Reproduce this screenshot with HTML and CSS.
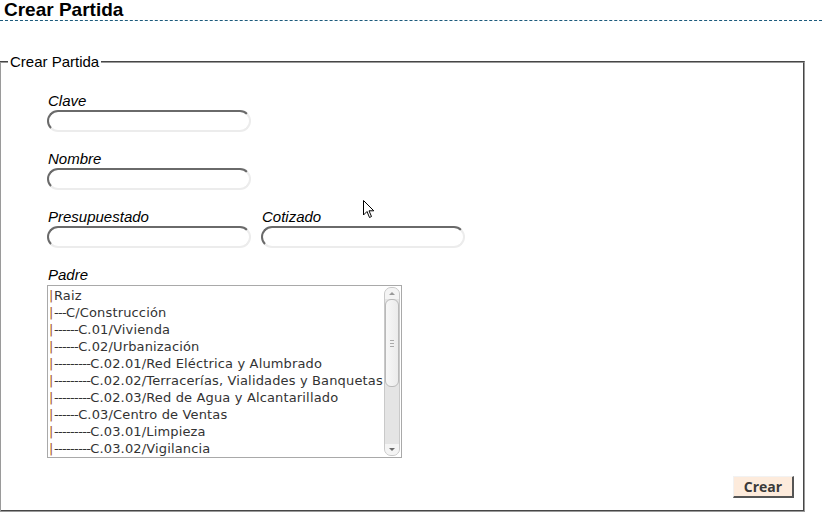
FILE: index.html
```html
<!DOCTYPE html>
<html lang="es">
<head>
<meta charset="utf-8">
<title>Crear Partida</title>
<link rel="stylesheet" href="styles.css">
</head>
<body>
<h1 class="title">Crear Partida</h1>
<fieldset class="box">
  <legend class="legend">Crear Partida</legend>
  <div class="form">
    <div class="row">
      <div class="field">
        <label class="label">Clave</label>
        <div class="input"></div>
      </div>
    </div>
    <div class="row">
      <div class="field">
        <label class="label">Nombre</label>
        <div class="input"></div>
      </div>
    </div>
    <div class="row">
      <div class="field">
        <label class="label">Presupuestado</label>
        <div class="input"></div>
      </div>
      <div class="field">
        <label class="label">Cotizado</label>
        <div class="input"></div>
      </div>
    </div>
    <div class="row">
      <div class="field">
        <label class="label">Padre</label>
        <div class="listbox">
          <div class="options">
            <div class="opt"><span class="bar">|</span>Raiz</div>
            <div class="opt"><span class="bar">|</span><span class="d">---</span>C/Construcción</div>
            <div class="opt"><span class="bar">|</span><span class="d">------</span>C.01/Vivienda</div>
            <div class="opt"><span class="bar">|</span><span class="d">------</span>C.02/Urbanización</div>
            <div class="opt"><span class="bar">|</span><span class="d">---------</span>C.02.01/Red Eléctrica y Alumbrado</div>
            <div class="opt"><span class="bar">|</span><span class="d">---------</span>C.02.02/Terracerías, Vialidades y Banquetas</div>
            <div class="opt"><span class="bar">|</span><span class="d">---------</span>C.02.03/Red de Agua y Alcantarillado</div>
            <div class="opt"><span class="bar">|</span><span class="d">------</span>C.03/Centro de Ventas</div>
            <div class="opt"><span class="bar">|</span><span class="d">---------</span>C.03.01/Limpieza</div>
            <div class="opt"><span class="bar">|</span><span class="d">---------</span>C.03.02/Vigilancia</div>
          </div>
          <div class="scrollbar">
            <div class="arrow up"></div>
            <div class="track"><div class="thumb"><span class="grip"></span></div></div>
            <div class="arrow down"></div>
          </div>
        </div>
      </div>
    </div>
  </div>
  <div class="actions">
    <button class="btn" type="button">Crear</button>
  </div>
</fieldset>
<svg class="cursor" width="12" height="19" viewBox="0 0 12 19"><path d="M0.5 0.5 L0.5 15 L4 11.5 L6.5 17.5 L8.5 16.5 L6 10.8 L10.8 10.8 Z" fill="#fff" stroke="#000" stroke-width="1"/></svg>
</body>
</html>
```

FILE: styles.css
```css
html, body {
  margin: 0;
  padding: 0;
  background: #fff;
  font-family: "Liberation Sans", Arial, sans-serif;
  color: #000;
}
body {
  position: relative;
  width: 822px;
  height: 522px;
  overflow: hidden;
}
.title {
  margin: 0;
  padding: 0 0 0 4px;
  height: 20px;
  font-size: 19px;
  font-weight: bold;
  line-height: 19px;
  border-bottom: 1px dashed #1d5b7c;
}
.box {
  margin: 33px 0 0 0;
  width: 788px;
  height: 454px;
  padding: 0 7px 0 7px;
  border: 2px groove #9a9a9a;
  border-left-width: 1px;
}
.legend {
  padding: 0 2px;
  font-size: 15px;
  line-height: 16px;
}
.form {
  padding-left: 39px;
  padding-top: 22px;
  display: flex;
  flex-direction: column;
  gap: 18px;
}
.row {
  display: flex;
  gap: 10px;
}
.field {
  display: flex;
  flex-direction: column;
}
.label {
  font-style: italic;
  font-size: 15px;
  line-height: 18px;
  padding-left: 1px;
}
.input {
  width: 200px;
  height: 18px;
  border: 2px solid;
  border-color: #6a6a6a #ececec #ececec #6a6a6a;
  border-radius: 11px;
  background: #fff;
}
.listbox {
  margin-top: 1px;
  width: 353px;
  height: 171px;
  border: 1px solid #a9a9a9;
  display: flex;
  background: #fff;
}
.options {
  flex: 1;
  padding: 1px 0 0 1px;
  overflow: hidden;
  font-family: "DejaVu Sans", sans-serif;
  font-size: 13px;
  color: #333;
}
.opt {
  height: 17px;
  line-height: 17px;
  white-space: nowrap;
  letter-spacing: 0.15px;
}
.d {
  letter-spacing: -0.65px;
}
.bar {
  color: #a4561c;
  letter-spacing: 0;
  margin-right: 0.5px;
}
.scrollbar {
  width: 14px;
  margin: 1px 1px 1px 0;
  display: flex;
  flex-direction: column;
  border: 1px solid #c9c9c9;
  border-radius: 7px;
  background: #e4e4e4;
}
.arrow {
  height: 11px;
  position: relative;
  background: #f4f4f4;
}
.arrow.up { border-radius: 6px 6px 0 0; }
.arrow.down { border-radius: 0 0 6px 6px; }
.arrow::after {
  content: "";
  position: absolute;
  left: 4px;
  width: 0;
  height: 0;
  border-left: 3px solid transparent;
  border-right: 3px solid transparent;
}
.arrow.up::after { top: 4px; border-bottom: 3px solid #9a9a9a; }
.arrow.down::after { top: 4px; border-top: 3px solid #6a6a6a; }
.track {
  flex: 1;
}
.thumb {
  height: 86px;
  background: linear-gradient(to right, #f7f7f7, #ebebeb);
  border: 1px solid #b9b9b9;
  border-radius: 6px;
  display: flex;
  align-items: center;
  justify-content: center;
}
.grip {
  width: 4px;
  height: 5px;
  border-top: 1px solid #aaa;
  border-bottom: 1px solid #aaa;
  position: relative;
}
.grip::after {
  content: "";
  position: absolute;
  left: 0;
  right: 0;
  top: 2px;
  border-top: 1px solid #aaa;
}
.actions {
  display: flex;
  justify-content: flex-end;
  padding-right: 2px;
  margin-top: 18px;
}
.btn {
  width: 61px;
  height: 22px;
  padding: 0;
  background: #fdebdc;
  border-style: solid;
  border-width: 1px 2px 2px 1px;
  border-color: #f2f2f2 #555 #555 #f2f2f2;
  font-family: "Open Sans", "DejaVu Sans", sans-serif;
  font-weight: bold;
  font-size: 14px;
  color: #3a3a3a;
}
.cursor {
  position: absolute;
  left: 363px;
  top: 200px;
}
```
